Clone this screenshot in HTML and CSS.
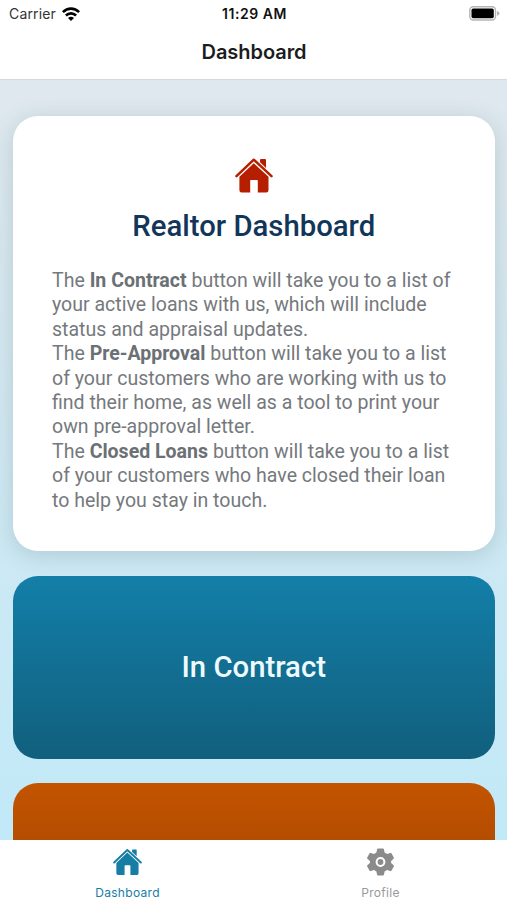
FILE: index.html
```html
<!DOCTYPE html>
<html lang="en">
<head>
<meta charset="utf-8">
<title>Dashboard</title>
<link rel="stylesheet" href="styles.css">
</head>
<body>
<svg width="0" height="0" class="defs">
  <symbol id="house" viewBox="0 0 38 36">
    <path d="M1.5 18.7 18.8 2.2 36.5 18.7" fill="none" stroke="currentColor" stroke-width="2.5" stroke-linecap="round" stroke-linejoin="round"/>
    <path d="M25 4.800V2.400Q25 1.500 26 1.500H30Q31 1.500 31 2.500V10.600Z" fill="currentColor"/>
    <path d="M18.800 5.700 33.500 19.300V32.800Q33.500 35 31.300 35H22.800V23.200Q22.800 22.400 22 22.400H16Q15.200 22.400 15.200 23.200V35H6.600Q4.400 35 4.400 32.800V19.300Z" fill="currentColor"/>
  </symbol>
</svg>
<div class="app">
  <header class="header">
    <div class="status">
      <div class="carrier">Carrier
        <svg class="wifi" viewBox="0 0 18 14" fill="none" stroke="#000" stroke-width="2.6">
          <path d="M.9 5.100C5.500.500 12.500.500 17.100 5.100"/>
          <path d="M3.900 8.500C6.800 5.600 11.200 5.600 14.100 8.500"/>
          <path d="M9 13.900 6 11Q9 8.400 12 11Z" fill="#000" stroke="none"/>
        </svg>
      </div>
      <div class="time">11:29 AM</div>
      <svg class="battery" viewBox="0 0 31 15">
        <rect x=".8" y=".8" width="25.700" height="13.200" rx="3.500" fill="#fff" stroke="#b5b5b5" stroke-width="1.400"/>
        <rect x="2.500" y="2.500" width="22.300" height="9.800" rx="1.700"/>
        <path d="M28 5Q30.500 6 30.500 7.400T28 9.800Z" fill="#b5b5b5"/>
      </svg>
    </div>
    <h1 class="title">Dashboard</h1>
  </header>
  <main class="content">
    <section class="card">
      <svg class="card-icon"><use href="#house"/></svg>
      <h2 class="card-title">Realtor Dashboard</h2>
      <p class="copy">The <b>In Contract</b> button will take you to a list of<br>your active loans with us, which will include<br>status and appraisal updates.<br>The <b>Pre-Approval</b> button will take you to a list<br>of your customers who are working with us to<br>find their home, as well as a tool to print your<br>own pre-approval letter.<br>The <b>Closed Loans</b> button will take you to a list<br>of your customers who have closed their loan<br>to help you stay in touch.</p>
    </section>
    <button class="action contract">In Contract</button>
    <button class="action approval" aria-label="Pre-Approval"></button>
  </main>
  <nav class="tabs">
    <a class="tab active"><svg class="tab-home"><use href="#house"/></svg><span>Dashboard</span></a>
    <a class="tab"><svg class="tab-gear" viewBox="0 0 28 28">
      <path d="M10.600 1.200Q10.800.500 11.600.500H16.400Q17.200.500 17.400 1.200L18.100 4.600 20.500 6 23.800 4.900Q24.500 4.700 24.900 5.300L27.300 9.500Q27.600 10.200 27.100 10.700L24.600 12.900V15.100L27.100 17.300Q27.600 17.800 27.300 18.500L24.900 22.700Q24.500 23.300 23.800 23.100L20.500 22 18.100 23.400 17.400 26.800Q17.200 27.500 16.400 27.500H11.600Q10.800 27.500 10.600 26.800L9.900 23.400 7.500 22 4.200 23.100Q3.500 23.300 3.100 22.700L.7 18.500Q.4 17.800.9 17.300L3.400 15.100V12.900L.9 10.700Q.4 10.200.7 9.500L3.100 5.300Q3.500 4.700 4.200 4.900L7.500 6 9.900 4.600Z" fill="#8b8b8b"/>
      <circle cx="14" cy="14" r="3.900" fill="none" stroke="#fff" stroke-width="2"/>
    </svg><span>Profile</span></a>
  </nav>
</div>
</body>
</html>
```
FILE: styles.css
```css
* { box-sizing: border-box; }
body { margin: 0; font-family: Roboto, sans-serif; }
.defs { display: block; }
.app { height: 900px; display: flex; flex-direction: column; overflow: hidden; }
.header { height: 80px; flex: none; background: #fff; border-bottom: 1px solid #d3dada; font-family: Inter, sans-serif; }
.status { height: 27px; padding: 0 7px 0 9px; display: grid; grid-template-columns: 1fr auto 1fr; align-items: center; }
.carrier { display: flex; align-items: center; gap: 6px; font-size: 14px; letter-spacing: 0.15px; color: #333; }
.wifi { width: 18px; height: 14px; }
.time { font-size: 14px; font-weight: 600; letter-spacing: 0.55px; color: #111; }
.battery { width: 31px; height: 15px; justify-self: end; }
.title { margin: 0; height: 51px; padding-left: 1px; line-height: 51px; text-align: center; font-size: 20px; font-weight: 600; letter-spacing: -0.05px; color: #1c1c1e; }
.content { flex: 1; min-height: 0; overflow: hidden; padding: 35.5px 12.5px 0 13px; display: flex; flex-direction: column; gap: 24.5px; background: linear-gradient(#dfe8ee, #c1e9f8); }
.card { height: 435.5px; flex: none; padding: 41.5px 30px 0 39px; border-radius: 25px; background: #fff; box-shadow: 0 4px 22px rgba(70, 100, 95, 0.22); display: flex; flex-direction: column; align-items: center; }
.card-icon { width: 38px; height: 37px; flex: none; margin-right: 9px; color: #b51f00; }
.card-title { margin: 14px 9px 0 0; line-height: 36px; font-size: 29.3px; font-weight: 500; color: #12365a; white-space: nowrap; }
.copy { margin: 25px 0 0; align-self: stretch; font-size: 19.55px; line-height: 24.4px; color: #75797d; white-space: nowrap; }
.copy b { font-weight: 700; color: #6b7074; }
.action { height: 183px; flex: none; padding: 0; border: 0; border-radius: 25px; font: 500 29.3px Roboto, sans-serif; color: #eefaff; }
.contract { background: linear-gradient(#137fa8, #115f7d); }
.approval { background: linear-gradient(#c35400, #943e00); }
.tabs { height: 60px; flex: none; display: flex; background: #fff; }
.tab { flex: 1; display: flex; flex-direction: column; align-items: center; font: 12px Inter, sans-serif; letter-spacing: 0.3px; color: #999; }
.tab.active { color: #187da5; }
.tab svg { width: 29px; height: 28px; margin-top: 8px; }
.tab span { margin-top: 9px; line-height: 15px; }
.tab.active { padding-left: 1px; }
```
